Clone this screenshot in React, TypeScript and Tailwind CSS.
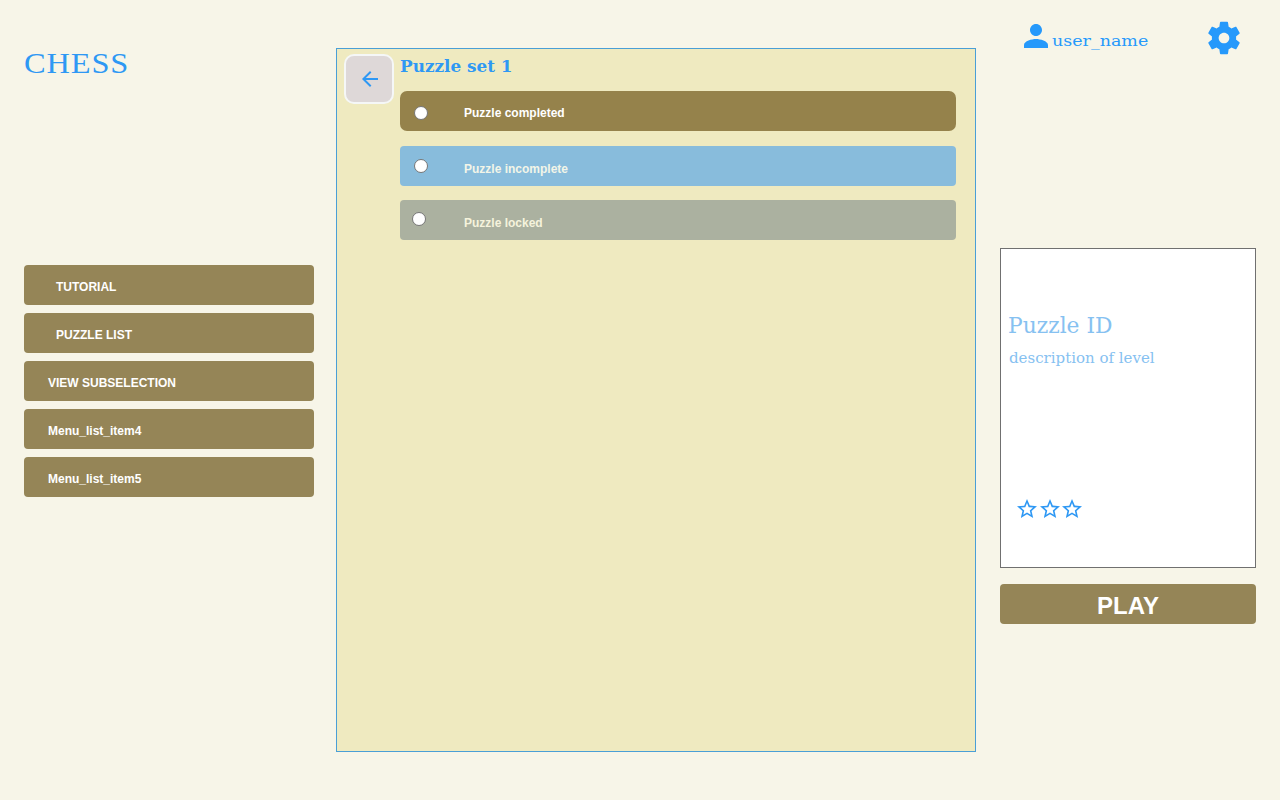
import { MdArrowBack, MdPerson, MdStarBorder } from 'react-icons/md';

const menuItems = [
  { label: 'TUTORIAL', indent: 'pl-8' },
  { label: 'PUZZLE LIST', indent: 'pl-8' },
  { label: 'VIEW SUBSELECTION', indent: 'pl-6' },
  { label: 'Menu_list_item4', indent: 'pl-6' },
  { label: 'Menu_list_item5', indent: 'pl-6' },
];

const puzzles = [
  { label: 'Puzzle completed', row: 'mt-[9px] rounded-[7px] bg-[#95824b]', dot: 'ml-[14px] mt-[15px]', text: 'ml-[36px] mt-[14px] text-white' },
  { label: 'Puzzle incomplete', row: 'mt-[15px] rounded bg-[#88bcdc]', dot: 'ml-[14px] mt-[13px]', text: 'ml-[36px] mt-[15px] text-[#f2f5e8]' },
  { label: 'Puzzle locked', row: 'mt-[14px] rounded bg-[#abb1a0]', dot: 'ml-[12px] mt-[12px]', text: 'ml-[38px] mt-[15px] text-[#f5f3dc]' },
];

function Gear() {
  return (
    <svg width="40" height="40" viewBox="0 0 24 24" fill="currentColor" className="-ml-[4px] mt-[18px] shrink-0">
      <path d="M19.43 12.98c.04-.32.07-.64.07-.98s-.03-.66-.07-.98l2.11-1.65c.19-.15.24-.42.12-.64l-2-3.46c-.12-.22-.39-.3-.61-.22l-2.49 1c-.52-.4-1.08-.73-1.69-.98l-.38-2.65C14.46 2.18 14.25 2 14 2h-4c-.25 0-.46.18-.49.42l-.38 2.65c-.61.25-1.17.59-1.69.98l-2.49-1c-.23-.09-.49 0-.61.22l-2 3.46c-.13.22-.07.49.12.64l2.11 1.65c-.04.32-.07.65-.07.98s.03.66.07.98l-2.11 1.65c-.19.15-.24.42-.12.64l2 3.46c.12.22.39.3.61.22l2.49-1c.52.4 1.08.73 1.69.98l.38 2.65c.03.24.24.42.49.42h4c.25 0 .46-.18.49-.42l.38-2.65c.61-.25 1.17-.59 1.69-.98l2.49 1c.23.09.49 0 .61-.22l2-3.46c.12-.22.07-.49-.12-.64l-2.11-1.65zM12 15.3c-1.82 0-3.3-1.48-3.3-3.3s1.48-3.3 3.3-3.3 3.3 1.48 3.3 3.3-1.48 3.3-3.3 3.3z" transform="translate(12 12) scale(.97) translate(-12 -12)" />
    </svg>
  );
}

export default function App() {
  return (
    <div className="flex h-[800px] w-[1280px] overflow-hidden bg-[#f7f5e8] font-['Liberation_Sans',Arial,sans-serif] text-[12px] leading-4">
      <aside className="ml-6 w-[290px] shrink-0">
        <h1 className="mt-[43px] h-10 w-fit origin-left scale-x-[1.08] whitespace-nowrap font-['Liberation_Serif',serif] text-[30px] leading-10 tracking-[0.8px] text-[#2e98f4]">CHESS</h1>
        <nav className="mt-[182px] flex flex-col gap-2">
          {menuItems.map((item) => (
            <button key={item.label} className={`flex h-10 items-start rounded bg-[#958557] pt-[14px] text-left font-bold text-white ${item.indent}`}>
              {item.label}
            </button>
          ))}
        </nav>
      </aside>

      <main className="ml-[22px] mt-12 flex h-[704px] w-[640px] shrink-0 border border-[#4a9fd6] bg-[#efeac0]">
        <button aria-label="Back" className="ml-[7px] mt-[5px] flex h-[50px] w-[50px] shrink-0 items-center justify-center rounded-[10px] border-2 border-[#f5f7f7] bg-[#ded8d8] text-[#2e98f4]">
          <MdArrowBack size={24} className="translate-x-px" />
        </button>
        <section className="ml-[6px] w-[556px]">
          <h2 className="mt-[5px] h-7 w-fit origin-left scale-x-[0.99] whitespace-nowrap font-['DejaVu_Serif',serif] text-[17px] font-bold leading-6 text-[#2e98f4]">Puzzle set 1</h2>
          {puzzles.map((puzzle) => (
            <label key={puzzle.label} className={`flex h-10 items-start font-bold ${puzzle.row}`}>
              <input type="radio" name="puzzle" className={`h-[14px] w-[14px] shrink-0 appearance-none rounded-full border border-[#767676] bg-white ${puzzle.dot}`} />
              <span className={puzzle.text}>{puzzle.label}</span>
            </label>
          ))}
        </section>
      </main>

      <aside className="ml-6 flex w-64 shrink-0 flex-col">
        <header className="flex h-[248px] items-start text-[#2699fb]">
          <MdPerson size={36} className="ml-[18px] mt-[18px] shrink-0" />
          <span className="-ml-[2px] mt-[29px] w-[156px] whitespace-nowrap font-['DejaVu_Serif',serif] text-[15px] leading-6">
            <span className="inline-block origin-left scale-x-[1.165]">user_name</span>
          </span>
          <Gear />
        </header>
        <section className="h-80 border border-[#707070] bg-white">
          <h3 className="ml-[7px] mt-[61px] h-8 w-fit origin-left scale-x-[0.99] whitespace-nowrap font-['DejaVu_Serif',serif] text-[22px] leading-8 text-[#86c1f1]">Puzzle ID</h3>
          <p className="ml-2 mt-[3px] h-6 w-fit origin-left whitespace-nowrap pt-px font-['DejaVu_Serif',serif] text-[15px] leading-6 text-[#86c1f1]">description of level</p>
          <div className="ml-[14px] mt-[128px] flex text-[#2e98f4]">
            <MdStarBorder size={24} className="-mr-[1px]" />
            <MdStarBorder size={24} className="-mr-[2px]" />
            <MdStarBorder size={24} />
          </div>
        </section>
        <button className="mt-4 flex h-10 items-center justify-center rounded bg-[#958557] pt-[3px] text-[24px] font-bold leading-10 text-white">PLAY</button>
      </aside>
    </div>
  );
}
